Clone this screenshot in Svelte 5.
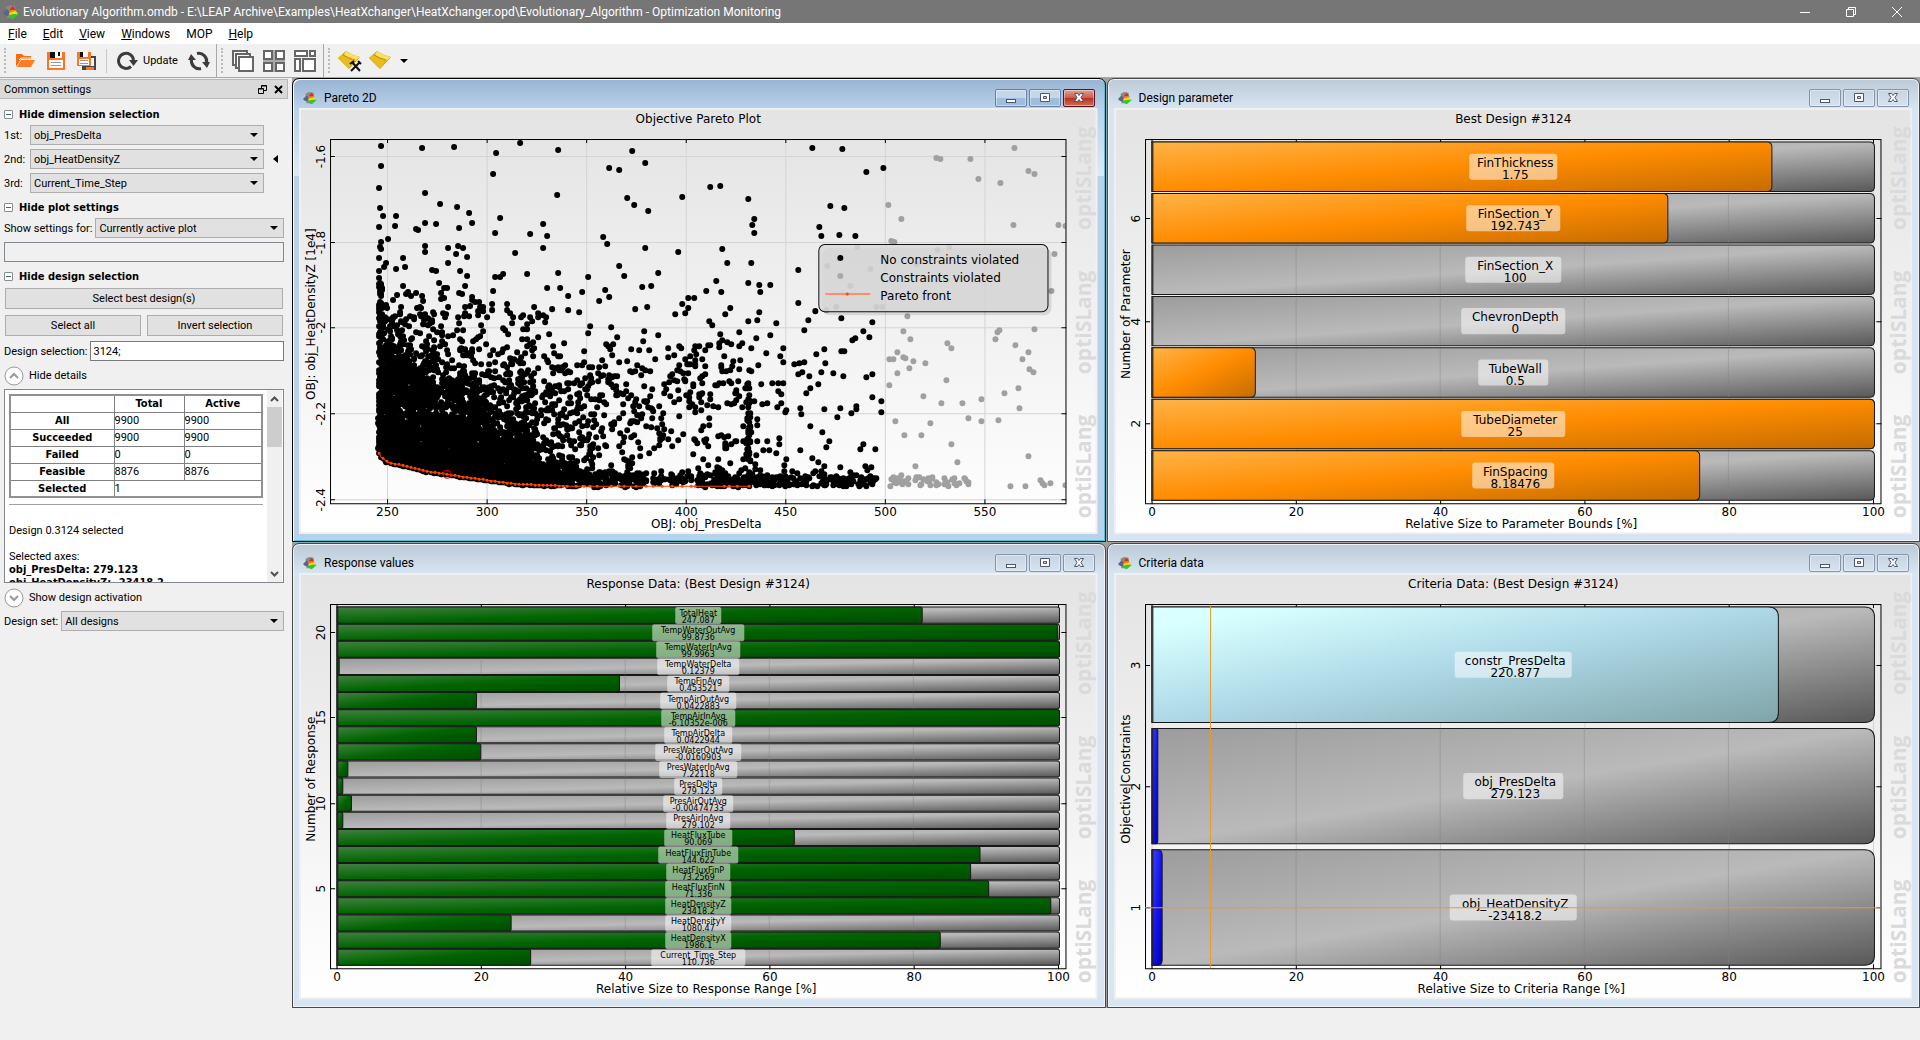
<script>
  const title =
    'Evolutionary Algorithm.omdb - E:\\LEAP Archive\\Examples\\HeatXchanger\\HeatXchanger.opd\\Evolutionary_Algorithm - Optimization Monitoring';

  const menus = [
    ['F', 'ile'],
    ['E', 'dit'],
    ['V', 'iew'],
    ['W', 'indows'],
    ['', 'MOP'],
    ['H', 'elp'],
  ];

  let first = 'obj_PresDelta';
  let second = 'obj_HeatDensityZ';
  let third = 'Current_Time_Step';
  let selection = '3124;';
  let filter = '';

  const dimensions = ['obj_PresDelta', 'obj_HeatDensityZ', 'Current_Time_Step'];

  const details = [
    ['All', '9900', '9900'],
    ['Succeeded', '9900', '9900'],
    ['Failed', '0', '0'],
    ['Feasible', '8876', '8876'],
  ];

  // name, value, percent of the range, width of the label plate
  const parameters = [
    ['FinThickness', '1.75', 85.8, 88],
    ['FinSection_Y', '192.743', 71.4, 94],
    ['FinSection_X', '100', 0, 96],
    ['ChevronDepth', '0', 0, 104],
    ['TubeWall', '0.5', 14.3, 70],
    ['TubeDiameter', '25', 100, 104],
    ['FinSpacing', '8.18476', 75.8, 82],
  ];

  const responses = [
    ['TotalHeat', '247.087', 81, 46],
    ['TempWaterOutAvg', '99.8736', 99.7, 92],
    ['TempWaterInAvg', '99.9963', 100, 84],
    ['TempWaterDelta', '0.12379', 0.3, 82],
    ['TempFinAvg', '0.453521', 39.1, 62],
    ['TempAirOutAvg', '0.0422883', 19.3, 76],
    ['TempAirInAvg', '-6.10352e-006', 100, 74],
    ['TempAirDelta', '0.0422944', 19.3, 68],
    ['PresWaterOutAvg', '-0.0160903', 19.9, 86],
    ['PresWaterInAvg', '7.22118', 1.5, 78],
    ['PresDelta', '279.123', 0.8, 48],
    ['PresAirOutAvg', '-0.00474733', 2, 70],
    ['PresAirInAvg', '279.102', 0.8, 64],
    ['HeatFluxTube', '90.069', 63.3, 68],
    ['HeatFluxFinTube', '144.622', 89, 80],
    ['HeatFluxFinP', '73.2569', 87.7, 64],
    ['HeatFluxFinN', '71.336', 90.2, 66],
    ['HeatDensityZ', '23418.2', 98.8, 66],
    ['HeatDensityY', '1080.47', 24.1, 66],
    ['HeatDensityX', '1986.1', 83.5, 66],
    ['Current_Time_Step', '110.736', 26.8, 94],
  ];

  const criteria = [
    ['constr_PresDelta', '220.877', 86.7, 117, 'cyan'],
    ['obj_PresDelta', '279.123', 0.8, 100, 'blue'],
    ['obj_HeatDensityZ', '-23418.2', 1.4, 127, 'blue'],
  ];

  const percentTicks = [0, 20, 40, 60, 80, 100].map((v) => [v, 38 + v * 7.21]);

  const windows = [
    {
      name: 'Pareto 2D', kind: 'pareto', active: true,
      title: 'Objective Pareto Plot', xLabel: 'OBJ: obj_PresDelta', yLabel: 'OBJ: obj_HeatDensityZ [1e4]',
      xTicks: [250, 300, 350, 400, 450, 500, 550].map((v, i) => [v, 88.5 + i * 99.5]),
      yTicks: [['-1.6', 48.5], ['-1.8', 134.5], ['-2', 219.5], ['-2.2', 305.5], ['-2.4', 391.5]],
    },
    {
      name: 'Design parameter', kind: 'bars',
      title: 'Best Design #3124', xLabel: 'Relative Size to Parameter Bounds [%]', yLabel: 'Number of Parameter',
      xTicks: percentTicks,
      yTicks: [['6', 110.5], ['4', 213.5], ['2', 315.5]],
      data: parameters, color: 'orange', gap: 2, radius: 5, font: 12,
    },
    {
      name: 'Response values', kind: 'bars',
      title: 'Response Data: (Best Design #3124)', xLabel: 'Relative Size to Response Range [%]', yLabel: 'Number of Response',
      xTicks: percentTicks,
      yTicks: [['20', 59.5], ['15', 144.5], ['10', 230.5], ['5', 315.5]],
      data: responses, color: 'green', gap: 1, radius: 2, font: 8,
    },
    {
      name: 'Criteria data', kind: 'bars', crosshair: true,
      title: 'Criteria Data: (Best Design #3124)', xLabel: 'Relative Size to Criteria Range [%]', yLabel: 'Objective|Constraints',
      xTicks: percentTicks,
      yTicks: [['3', 92.5], ['2', 213.5], ['1', 334.5]],
      data: criteria, gap: 6, radius: 10, font: 12,
    },
  ];

  // All bars share the band between y = 34 and y = 392
  function layoutBars(win) {
    const pitch = (358 + win.gap) / win.data.length;
    return win.data.map(([name, value, percent, plate, color], i) => ({
      name,
      value,
      plate,
      color: color || win.color,
      y: 34 + i * pitch,
      h: pitch - win.gap,
      w: percent * 7.22,
    }));
  }

  // Square on the left, rounded on the right
  function barPath(y, w, h, radius) {
    const r = Math.min(radius, w / 2);
    return `M38 ${y}h${w - r}q${r} 0 ${r} ${r}v${h - 2 * r}q0 ${r} ${-r} ${r}h${r - w}z`;
  }

  const outliers = [
    [82, 38], [82, 58], [80, 80], [81, 100], [84, 108], [80, 119], [97, 108], [96, 118], [89, 131], [82, 134],
    [81, 139], [82, 141], [80, 150], [87, 155], [85, 159], [80, 163], [80, 170], [97, 161], [104, 150], [106, 159],
    [123, 40], [155, 39], [126, 85], [141, 96], [158, 99], [170, 105], [173, 115], [160, 120], [137, 116], [126, 115],
    [117, 121], [119, 122], [126, 138], [126, 144], [149, 140], [159, 138], [164, 140], [157, 146], [168, 149], [149, 155],
    [133, 162], [137, 163], [161, 163], [168, 168], [140, 175], [145, 180], [148, 180], [166, 178], [104, 178], [109, 184],
    [98, 187], [194, 66], [197, 45], [221, 35], [259, 42], [258, 87], [201, 110], [196, 125], [231, 126], [244, 116],
    [248, 128], [244, 140], [216, 145], [259, 165], [228, 166], [204, 166], [196, 169], [201, 169], [194, 183], [248, 180],
    [261, 180], [283, 184], [289, 169], [306, 182], [308, 136], [304, 129], [320, 158], [325, 168], [346, 140], [343, 179],
    [352, 178], [359, 165], [328, 90], [335, 97], [349, 103], [310, 60], [320, 62], [333, 43], [346, 55], [383, 89],
    [379, 144], [336, 201], [300, 193], [280, 204], [269, 188], [269, 202], [253, 201], [376, 206], [383, 196], [389, 190],
    [395, 190], [389, 200], [345, 223], [359, 227], [312, 219], [318, 229], [291, 218], [289, 225], [239, 229], [411, 79],
    [421, 78], [449, 91], [455, 111], [453, 117], [455, 125], [423, 141], [428, 155], [452, 155], [417, 173], [407, 183],
    [422, 184], [449, 175], [460, 177], [471, 177], [461, 184], [431, 200], [426, 206], [460, 204], [458, 212], [449, 213],
    [410, 213], [413, 217], [477, 215], [513, 40], [543, 41], [584, 60], [567, 64], [531, 98], [545, 100], [520, 119],
    [522, 128], [540, 127], [556, 128], [499, 162], [499, 195], [516, 203], [509, 212], [542, 210], [573, 214], [564, 223],
    [570, 229], [556, 230], [553, 232], [505, 222], [440, 224], [421, 226], [471, 227], [457, 230], [443, 235], [484, 240],
    [525, 241], [467, 245], [481, 248], [517, 246], [542, 243], [545, 243], [526, 255], [484, 254], [459, 257], [495, 256],
    [500, 255], [505, 254], [499, 266], [503, 264], [510, 268], [522, 264], [534, 265], [544, 268], [567, 269], [573, 266],
    [462, 276], [473, 275], [479, 275], [484, 275], [479, 283], [482, 286], [511, 280], [519, 276], [507, 285], [573, 289],
    [582, 293], [582, 304], [557, 298], [557, 301], [525, 301], [501, 300], [502, 306], [487, 302], [486, 304], [482, 295],
    [478, 299], [463, 296], [468, 295], [541, 300], [552, 305], [538, 309], [511, 318], [523, 324], [530, 333], [527, 339],
    [501, 342], [513, 350], [519, 354], [525, 358], [541, 359], [564, 336], [561, 341], [576, 341], [566, 358], [572, 359],
    [487, 351], [485, 357], [468, 333], [480, 330], [480, 336], [464, 342], [470, 342], [477, 345], [457, 347], [458, 311],
    [458, 317], [451, 319],
  ];

  const violated = [
    [715, 40], [637, 50], [641, 51], [671, 51], [679, 71], [701, 75], [729, 63], [735, 66], [589, 97], [602, 111],
    [714, 117], [759, 117], [766, 118], [592, 133], [595, 134], [558, 139], [638, 142], [650, 139], [528, 158], [571, 161],
    [551, 178], [617, 156], [537, 199], [577, 199], [583, 199], [527, 202], [755, 146], [752, 183], [608, 208], [604, 223],
    [611, 231], [735, 221], [700, 222], [698, 224], [696, 231], [716, 237], [729, 244], [723, 251], [648, 235], [652, 240],
    [598, 244], [604, 249], [606, 250], [594, 251], [590, 251], [614, 253], [626, 255], [610, 260], [598, 265], [647, 272],
    [590, 277], [730, 261], [734, 264], [719, 280], [705, 285], [682, 291], [624, 288], [642, 295], [663, 295], [720, 300],
    [669, 310], [682, 313], [699, 312], [596, 313], [631, 315], [605, 327], [622, 327], [652, 336], [729, 348], [658, 354],
    [616, 358], [602, 367], [741, 372], [751, 375], [745, 377], [743, 375], [711, 378], [726, 378], [766, 377],
  ];

  const front = [
    [80, 345], [82, 349], [89, 354], [107, 358], [127, 363], [148, 366], [167, 369], [188, 372],
    [220, 376], [245, 377], [273, 378], [407, 378], [450, 378],
  ];

  // Height of the Pareto front at x
  function frontAt(x) {
    for (let i = 1; i < front.length; i++) {
      const [x0, y0] = front[i - 1];
      const [x1, y1] = front[i];
      if (x <= x1) return y0 + ((y1 - y0) * (x - x0)) / (x1 - x0);
    }
    return 378;
  }

  let seed = 3124;
  function random() {
    seed = (seed * 1664525 + 1013904223) % 4294967296;
    return seed / 4294967296;
  }

  // x from, x to, y from, y to, number of designs
  const clouds = [
    [80, 83, 172, 345, 120],
    [80, 130, 188, 215, 30], [130, 180, 188, 215, 22], [180, 260, 200, 215, 22], [260, 400, 185, 215, 3],
    [80, 110, 210, 245, 54], [110, 180, 210, 245, 52], [180, 250, 220, 245, 18], [250, 400, 230, 250, 16],
    [80, 105, 243, 262, 100], [80, 125, 262, 305, 420], [80, 180, 308, 372, 1500],
    [105, 130, 243, 262, 22], [130, 180, 240, 280, 70], [180, 260, 245, 280, 80],
    [125, 180, 275, 305, 170], [180, 240, 275, 310, 110], [175, 235, 308, 345, 210],
    [180, 235, 338, 378, 420], [235, 275, 355, 378, 150], [235, 300, 280, 355, 150],
    [255, 330, 255, 290, 44], [300, 400, 240, 300, 80], [300, 400, 300, 350, 60],
    [265, 340, 355, 378, 70], [330, 405, 364, 378, 70], [250, 345, 369, 378, 100],
    [395, 455, 235, 300, 62], [395, 455, 300, 365, 34], [400, 470, 370, 378, 75], [400, 460, 362, 375, 26],
    [455, 577, 368, 378, 120], [460, 575, 362, 372, 22],
  ];
  // Designs that share one value of the first objective
  const columns = [[448, 451, 275, 378, 44], [425, 427, 335, 378, 14]];

  const feasible = [...outliers];
  function scatter([x0, x1, y0, y1, count], spread) {
    for (let i = 0; i < count; i++) {
      const x = x0 + random() * (x1 - x0) + (random() - 0.5) * spread;
      const y = y0 + random() * (y1 - y0) + (random() - 0.5) * spread;
      if (x > 79 && y < frontAt(x) + 1) feasible.push([Math.round(x), Math.round(y)]);
    }
  }
  for (const cloud of clouds) scatter(cloud, cloud[1] - cloud[0] > 20 && cloud[1] < 500 ? 14 : 0);
  for (const column of columns) scatter(column, 0);

  // Designs packed along the front itself
  for (let x = 80; x < 260; x += 2) {
    for (let k = 0; k < 5; k++) feasible.push([x, Math.round(frontAt(x) - k * 4)]);
  }
  for (let i = 0; i < 50; i++) {
    violated.push([590 + Math.round(random() * 80), 369 + Math.round(random() * 9)]);
  }

  // Zero-length segments with round caps draw as dots
  const dots = (points) => points.map(([x, y]) => `M${x} ${y}h0`).join('');

  const frontMarks = [];
  for (let x = 80; x < 270; x += 4) frontMarks.push([x, Math.round(frontAt(x))]);
  for (const x of [277, 285, 291, 298, 312, 320, 325, 337, 347, 354, 363, 373, 383, 392, 396, 425, 430, 438, 450]) {
    frontMarks.push([x, 378]);
  }
</script>

{#snippet appIcon()}
  <svg class="app-icon" width="16" height="16" viewBox="0 0 16 16" aria-hidden="true">
    <path d="M3 3 7 1 12 2 13 8 7 14 4 14z" fill="#8a8a80" />
    <path d="M0 9 4 5 7 8 5 12 2 11z" fill="#5a6488" />
    <path d="M7 5 10 2 12 5 11 7 8 7z" fill="#e8281c" />
    <path d="M6 8 8 6 12 6 13 8 10 9 7 10z" fill="#f88a18" />
    <path d="M6 9 13 7 15 10 11 11 7 12z" fill="#f4dc18" />
    <path d="M6 11 11 10 16 10 10 15 7 14z" fill="#30c828" />
  </svg>
{/snippet}

{#snippet gem()}
  <path d="M0 9 8 2Q14 6 22 8L11 20z" fill="#c89808" />
  <path d="M8 2Q14 6 22 8L17 12Q10 9 5 7z" fill="#f8e060" />
  <path d="M0 9 5 5Q10 10 17 12L11 20z" fill="#e8bc20" />
  <path d="M5 6Q10 9 17 11" fill="none" stroke="#b88800" />
{/snippet}

{#snippet axes(win)}
  <g class="frame">
    <rect x="31.5" y="31.5" width="735" height="364" />
    {#each win.xTicks as [, x]}
      <path d="M{x} 31v4M{x} 396v-5" />
    {/each}
    {#each win.yTicks as [, y]}
      <path d="M31 {y}h5M767 {y}h-5" />
    {/each}
  </g>
  <text class="caption" x="399" y="15">{win.title}</text>
  {#each win.xTicks as [label, x]}
    <text x={x} y="408">{label}</text>
  {/each}
  {#each win.yTicks as [label, y]}
    <text transform="translate(26 {y}) rotate(-90)">{label}</text>
  {/each}
  <text x="407" y="420">{win.xLabel}</text>
  <text transform="translate(16 206) rotate(-90)">{win.yLabel}</text>
{/snippet}

{#snippet grid(win)}
  <g class="grid">
    {#each win.xTicks as [, x]}
      <path d="M{x} 32V395" />
    {/each}
    {#each win.yTicks as [, y]}
      <path d="M32 {y}H766" />
    {/each}
  </g>
{/snippet}

<div class="app">
  <header class="titlebar">
    {@render appIcon()}
    <span class="title">{title}</span>
    <button aria-label="Minimize"><svg width="12" height="12"><path d="M1 6.5h10" /></svg></button>
    <button aria-label="Restore"><svg width="12" height="12"><path d="M1.500 3.500h7v7h-7zM3.500 3V1.500h7v7H9" /></svg></button>
    <button aria-label="Close"><svg width="12" height="12"><path d="M1 1l10 10M11 1L1 11" /></svg></button>
  </header>

  <nav class="menubar">
    {#each menus as [key, rest]}
      <button><u>{key}</u>{rest}</button>
    {/each}
  </nav>

  <div class="toolbar">
    <div class="group">
      <button aria-label="Open">
        <svg width="20" height="20" viewBox="0 0 20 20">
          <path d="M0 16V3h6l2 2h7v3H5z" fill="#ff6a10" />
          <path d="M5 9h14l-4 7H1z" fill="#ff7d20" />
          <path d="M3 9l2-2h12" fill="none" stroke="#fff" />
        </svg>
      </button>
      <button aria-label="Save">
        <svg width="20" height="20" viewBox="0 0 20 20">
          <path d="M1 1h18v18H1z" fill="#ff7420" />
          <path d="M4 1h12v6H4z" fill="#111" /><path d="M9 1h7v6H9z" fill="#fff" />
          <path d="M12 1h2v4h-2z" fill="#111" />
          <path d="M3 9h14v8H3z" fill="#fff" /><path d="M5 11.500h10M5 14.500h10" stroke="#999" />
        </svg>
      </button>
      <button aria-label="Save all">
        <svg width="20" height="20" viewBox="0 0 20 20">
          <path d="M6 5h14v14H6z" fill="#444" /><path d="M8 7h10v8H8z" fill="#fff" />
          <path d="M10 16h8v3h-8z" fill="#ff7420" />
          <path d="M1 1h14v14H1z" fill="#ff7420" />
          <path d="M4 1h8v5H4z" fill="#111" /><path d="M7 1h5v5H7z" fill="#fff" />
          <path d="M3 8h10v6H3z" fill="#fff" /><path d="M4 9.500h8M4 12.500h8" stroke="#999" />
        </svg>
      </button>
      <i class="rule"></i>
      <button class="update">
        <svg width="22" height="20" viewBox="0 0 22 20">
          <path d="M14 15.500A7.500 7.500 0 1 1 16.500 9" fill="none" stroke="#3c3c3c" stroke-width="3" />
          <path d="M12 9h9l-4.500 6z" fill="#3c3c3c" />
        </svg>
        Update
      </button>
      <button aria-label="Update automatically">
        <svg width="22" height="22" viewBox="0 0 22 22">
          <path d="M9 3.500A8 8 0 0 1 18.500 13M13 18.500A8 8 0 0 1 3.500 9" fill="none" stroke="#3c3c3c" stroke-width="3" />
          <path d="M14 12h8l-3 6zM0 10h8L3 4z" fill="#3c3c3c" />
        </svg>
      </button>
    </div>
    <div class="group windows">
      <button aria-label="Cascade">
        <svg width="24" height="24" viewBox="0 0 24 24">
          <g fill="#fff" stroke="#666" stroke-width="2">
            <rect x="2" y="2" width="14" height="14" />
            <rect x="5" y="5" width="14" height="14" />
            <rect x="8" y="8" width="14" height="14" />
          </g>
        </svg>
      </button>
      <button aria-label="Tile">
        <svg width="24" height="24" viewBox="0 0 24 24">
          <path d="M1 1h22v22H1z" fill="#aaa" />
          <g fill="#fff" stroke="#666" stroke-width="2">
            <path d="M2 2h8v8H2zM14 2h8v8h-8zM2 14h8v8H2zM14 14h8v8h-8z" />
          </g>
        </svg>
      </button>
      <button aria-label="Arrange">
        <svg width="24" height="24" viewBox="0 0 24 24">
          <g fill="#fff" stroke="#666" stroke-width="2">
            <path d="M2 2h12v5H2zM17 2h5v5h-5zM2 10h5v12H2zM10 10h12v12H10z" />
          </g>
        </svg>
      </button>
    </div>
    <div class="group last">
      <button aria-label="Postprocessing settings">
        <svg width="24" height="24" viewBox="0 0 24 24">
          {@render gem()}
          <path d="M13 22l8-8M14 13l8 9M12 15l4-3M20 12l3 3" stroke="#111" stroke-width="2" />
        </svg>
      </button>
      <button aria-label="Postprocessing">
        <svg width="24" height="24" viewBox="0 0 24 24">{@render gem()}</svg>
      </button>
      <button class="more" aria-label="More"><svg width="8" height="4"><path d="M0 0h8l-4 4z" /></svg></button>
    </div>
  </div>

  <main>
    <aside>
      <div class="dock-title">
        <span>Common settings</span>
        <button aria-label="Float">
          <svg width="9" height="9"><path d="M.5 3.500h5v5h-5zM3.500 3V.5h5v5H6M.5 4h5M3 1h6" fill="none" stroke="#000" /></svg>
        </button>
        <button aria-label="Close panel">
          <svg width="9" height="9"><path d="M1 1l7 7M8 1L1 8" stroke="#000" stroke-width="2" /></svg>
        </button>
      </div>

      <div class="settings">
        <button class="heading"><i class="minus"></i>Hide dimension selection</button>
        <div class="row dim">
          <label for="dim1">1st:</label>
          <span class="select"><select id="dim1" bind:value={first}>{#each dimensions as d}<option>{d}</option>{/each}</select></span>
        </div>
        <div class="row dim">
          <label for="dim2">2nd:</label>
          <span class="select"><select id="dim2" bind:value={second}>{#each dimensions as d}<option>{d}</option>{/each}</select></span>
          <button class="swap" aria-label="Swap axes"><svg width="5" height="8"><path d="M5 0v8L0 4z" /></svg></button>
        </div>
        <div class="row dim">
          <label for="dim3">3rd:</label>
          <span class="select"><select id="dim3" bind:value={third}>{#each dimensions as d}<option>{d}</option>{/each}</select></span>
        </div>

        <button class="heading"><i class="minus"></i>Hide plot settings</button>
        <div class="row">
          <label for="plot">Show settings for:</label>
          <span class="select"><select id="plot"><option>Currently active plot</option></select></span>
        </div>
        <input class="filter" aria-label="Filter" bind:value={filter} />

        <button class="heading"><i class="minus"></i>Hide design selection</button>
        <div class="buttons"><button>Select best design(s)</button></div>
        <div class="buttons"><button>Select all</button><button>Invert selection</button></div>
        <div class="row">
          <label for="designs">Design selection:</label>
          <input id="designs" bind:value={selection} />
        </div>
        <button class="expander">
          <svg width="20" height="20"><circle cx="10" cy="10" r="9" /><path d="M6 12l4-4 4 4" /></svg>
          Hide details
        </button>

        <div class="details">
          <div class="content">
            <table>
              <thead>
                <tr><th></th><th>Total</th><th>Active</th></tr>
              </thead>
              <tbody>
                {#each details as [name, total, active]}
                  <tr><th>{name}</th><td>{total}</td><td>{active}</td></tr>
                {/each}
                <tr><th>Selected</th><td colspan="2">1</td></tr>
              </tbody>
            </table>
            <hr />
            <p>Design 0.3124 selected</p>
            <p>Selected axes:<br /><b>obj_PresDelta: 279.123<br />obj_HeatDensityZ: -23418.2</b></p>
          </div>
          <div class="scrollbar">
            <button aria-label="Scroll up"><svg width="9" height="6"><path d="M1 5l3.500-3.500L8 5" /></svg></button>
            <i></i>
            <button aria-label="Scroll down"><svg width="9" height="6"><path d="M1 1l3.500 3.500L8 1" /></svg></button>
          </div>
        </div>

        <button class="expander">
          <svg width="20" height="20"><circle cx="10" cy="10" r="9" /><path d="M6 8l4 4 4-4" /></svg>
          Show design activation
        </button>
        <div class="row">
          <label for="set">Design set:</label>
          <span class="select"><select id="set"><option>All designs</option></select></span>
        </div>
      </div>
    </aside>

    <div class="workspace">
      {#each windows as win}
        <section class="window" class:active={win.active}>
          <div class="caption-bar">
            {@render appIcon()}
            <h2>{win.name}</h2>
            <button aria-label="Minimize {win.name}">
              <svg width="12" height="12"><rect x="1.500" y="7.500" width="9" height="3" /></svg>
            </button>
            <button aria-label="Maximize {win.name}">
              <svg width="12" height="12"><path d="M1.500 1.500h9v8h-9zM4.500 4.500v2h3v-2z" fill-rule="evenodd" /></svg>
            </button>
            <button class="close" aria-label="Close {win.name}">
              <svg width="12" height="12">
                <path d="M1.500 1.500h3L6 3.500l1.500-2h3L8 5.500l2.500 4h-3L6 7.500l-1.500 2h-3L4 5.500z" />
              </svg>
            </button>
          </div>
          <svg class="chart" viewBox="0 0 798 426" role="img" aria-label={win.title}>
            <defs>
              <linearGradient id="backdrop" x1="0" y1="0" x2="0" y2="1">
                <stop offset="0" stop-color="#e4e4e4" /><stop offset="0.100" stop-color="#e6e6e6" /><stop offset="1" stop-color="#fff" />
              </linearGradient>
              <linearGradient id="gray" x1="0" y1="0" x2="1" y2="1">
                <stop offset="0" stop-color="#9c9c9c" /><stop offset="0.500" stop-color="#bababa" /><stop offset="1" stop-color="#585858" />
              </linearGradient>
              <linearGradient id="orange" x1="0" y1="0" x2="1" y2="1">
                <stop offset="0" stop-color="#ffb347" /><stop offset="0.500" stop-color="#ff8c00" /><stop offset="1" stop-color="#c46c00" />
              </linearGradient>
              <linearGradient id="green" x1="0" y1="0" x2="1" y2="1">
                <stop offset="0" stop-color="#408040" /><stop offset="0.500" stop-color="#006400" /><stop offset="1" stop-color="#004c00" />
              </linearGradient>
              <linearGradient id="cyan" x1="0" y1="0" x2="1" y2="1">
                <stop offset="0" stop-color="#dff" /><stop offset="0.100" stop-color="#d8ffff" />
                <stop offset="0.500" stop-color="#add8e6" /><stop offset="1" stop-color="#80a4a8" />
              </linearGradient>
              <linearGradient id="blue" x1="0" y1="0" x2="1" y2="1">
                <stop offset="0" stop-color="#44f" /><stop offset="0.500" stop-color="#1414f0" /><stop offset="1" stop-color="#00a" />
              </linearGradient>
              <clipPath id="plot-area"><rect x="32" y="32" width="734" height="363" /></clipPath>
            </defs>
            <rect width="798" height="426" fill="#f0f0f0" />
            <rect x="2" y="2" width="794" height="422" fill="url(#backdrop)" />
            {#each [122, 266, 410] as y}
              <text class="watermark" transform="translate(792 {y}) rotate(-90)">optiSLang</text>
            {/each}

            {#if win.kind === 'pareto'}
              {@render grid(win)}
              <g clip-path="url(#plot-area)">
                <path class="dots" d={dots(violated)} stroke="#a0a0a0" />
                <path class="dots" d={dots(feasible)} stroke="#000" />
                <polyline points={front.join(' ')} fill="none" stroke="#ff4500" />
                <path class="marks" d={dots(frontMarks)} />
                <circle cx="148" cy="366" r="4" fill="none" stroke="#e00000" />
              </g>
              {@render axes(win)}
              <rect x="523" y="140" width="229" height="67" rx="7" fill="#000" opacity="0.100" />
              <rect class="legend" x="519.500" y="136.500" width="229" height="67" rx="6" />
              <path class="dots" d="M541 150h0" stroke="#000" />
              <path class="dots" d="M541 168h0" stroke="#aaa" />
              <path d="M526 186h45" stroke="#f89070" stroke-width="2" />
              <path class="marks" d="M548 186h0" />
              <g class="legend-text">
                <text x="581" y="156">No constraints violated</text>
                <text x="581" y="174">Constraints violated</text>
                <text x="581" y="192">Pareto front</text>
              </g>
            {:else}
              {@render grid(win)}
              {@render axes(win)}
              {#each layoutBars(win) as bar}
                <path class="bar" d={barPath(bar.y, 722, bar.h, win.radius)} fill="url(#gray)" />
                <path class="bar-grid" d="M182 {bar.y}v{bar.h}M326 {bar.y}v{bar.h}M470 {bar.y}v{bar.h}M614 {bar.y}v{bar.h}" />
                {#if bar.w > 0}
                  <path class="bar" d={barPath(bar.y, bar.w, bar.h, win.radius)} fill="url(#{bar.color})" />
                {/if}
                <path d="M38.500 {bar.y}v{bar.h}" stroke="#222" stroke-width="2" opacity="0.700" />
              {/each}
              {#each layoutBars(win) as bar}
                {#if win.font === 8}
                  <rect class="plate" x={399 - bar.plate / 2} y={bar.y} width={bar.plate} height="17" rx="2" />
                  <text class="small" x="399" y={bar.y + 9}>{bar.name}</text>
                  <text class="small" x="399" y={bar.y + 16}>{bar.value}</text>
                {:else}
                  <rect class="plate" x={399 - bar.plate / 2} y={bar.y + bar.h / 2 - 13} width={bar.plate} height="26" rx="3" />
                  <text x="401" y={bar.y + bar.h / 2}>{bar.name}</text>
                  <text x="401" y={bar.y + bar.h / 2 + 12}>{bar.value}</text>
                {/if}
              {/each}
              {#if win.crosshair}
                <path class="crosshair" d="M96.500 32V395M31 334.500H767" />
              {/if}
            {/if}
          </svg>
        </section>
      {/each}
    </div>
  </main>
</div>

<style>
  :global(body) {
    margin: 0;
    background: #f0f0f0;
  }
  .app {
    min-height: 100vh;
    display: flex;
    flex-direction: column;
    font-family: Roboto, 'DejaVu Sans Condensed', sans-serif;
    font-size: 11px;
    color: #000;
    background: #f0f0f0;
  }
  button {
    padding: 0;
    border: 0;
    background: none;
    font: inherit;
    color: inherit;
  }
  svg {
    display: block;
  }

  /* Title bar */
  .titlebar {
    display: flex;
    align-items: center;
    height: 23px;
    padding-left: 3px;
    font-size: 12px;
    color: #fff;
    background: #767676;
  }
  .titlebar .title {
    flex: 1;
    margin-left: 4px;
  }
  .titlebar button {
    width: 46px;
    height: 20px;
    display: grid;
    place-items: center;
  }
  .titlebar button path {
    fill: none;
    stroke: #fff;
  }
  .menubar {
    display: flex;
    gap: 16px;
    height: 21px;
    padding-left: 8px;
    font-size: 12px;
    background: #fff;
  }

  /* Toolbar */
  .toolbar {
    display: flex;
    height: 34px;
    box-sizing: border-box;
    border-bottom: 1px solid #a8a8a8;
  }
  .group {
    display: flex;
    align-items: center;
    gap: 10px;
    padding: 0 6px 0 16px;
    border-right: 1px solid #a8a8a8;
    position: relative;
  }
  .group::before {
    content: '';
    position: absolute;
    left: 4px;
    top: 4px;
    bottom: 4px;
    border-left: 2px dotted #bbb;
  }
  .group.windows {
    gap: 7px;
    padding-left: 14px;
  }
  .group.last {
    gap: 7px;
    padding-left: 14px;
    border: 0;
  }
  .rule {
    width: 1px;
    height: 24px;
    background: #c8c8c8;
  }
  .update {
    display: flex;
    align-items: center;
    gap: 4px;
  }

  main {
    display: flex;
    gap: 4px;
  }

  /* Settings dock */
  aside {
    flex: 0 0 288px;
    padding-top: 1px;
  }
  .dock-title {
    display: flex;
    align-items: center;
    gap: 7px;
    height: 20px;
    box-sizing: border-box;
    padding: 0 4px;
    border: 1px solid #b8b8b8;
    border-left: 0;
    background: #dadada;
  }
  .dock-title span {
    flex: 1;
  }
  .settings {
    display: flex;
    flex-direction: column;
    gap: 4px;
    padding: 5px 4px;
  }
  .heading {
    display: flex;
    align-items: center;
    gap: 6px;
    height: 17px;
    padding-top: 4px;
    box-sizing: border-box;
    font-family: 'DejaVu Sans Condensed', sans-serif;
    font-weight: bold;
  }
  .minus {
    width: 7px;
    height: 7px;
    border: 1px solid #8c8c8c;
    border-radius: 1px;
    background: linear-gradient(#4060a0, #4060a0) center / 5px 1px no-repeat #fff;
  }
  .row {
    display: flex;
    align-items: center;
    gap: 3px;
    height: 20px;
  }
  .dim {
    gap: 6px;
  }
  .dim label {
    width: 20px;
  }
  .dim .select {
    flex: 0 0 234px;
  }
  .swap {
    margin-left: 3px;
  }
  .select {
    flex: 1;
    position: relative;
    display: flex;
  }
  .select::after {
    content: '';
    position: absolute;
    right: 6px;
    top: 8px;
    border: 4px solid transparent;
    border-top-color: #000;
    border-bottom: 0;
    pointer-events: none;
  }
  select,
  input {
    flex: 1;
    min-width: 0;
    height: 20px;
    box-sizing: border-box;
    padding: 0 3px;
    border: 1px solid #adadad;
    border-radius: 0;
    appearance: none;
    font: inherit;
    color: #000;
    background: #e1e1e1;
  }
  input {
    padding: 0 2px;
    border-color: #7a7a7a;
    background: #fff;
  }
  .filter {
    flex: none;
    border-color: #828790;
    background: #f0f0f0;
  }
  .buttons {
    display: flex;
    gap: 6px;
    margin: 1px;
  }
  .buttons button {
    flex: 1;
    height: 21px;
    border: 1px solid #adadad;
    background: #e1e1e1;
  }
  .expander {
    display: flex;
    align-items: center;
    gap: 5px;
    height: 20px;
    padding-top: 1px;
  }
  .expander circle {
    fill: #fff;
    stroke: #999;
  }
  .expander path {
    fill: none;
    stroke: #999;
    stroke-width: 2;
  }
  .details {
    display: flex;
    height: 194px;
    box-sizing: border-box;
    border: 1px solid #828790;
    background: #fff;
    overflow: hidden;
  }
  .content {
    flex: 1;
    padding: 4px;
  }
  table {
    width: 100%;
    border-collapse: collapse;
    border: 2px solid #909090;
    line-height: 15px;
  }
  th,
  td {
    height: 17px;
    box-sizing: border-box;
    padding: 0;
    border: 1px solid #808080;
    text-align: left;
  }
  th {
    width: 78px;
    text-align: center;
  }
  th:first-child {
    width: 104px;
  }
  th:nth-child(2) {
    width: 70px;
  }
  th,
  b {
    font-family: 'DejaVu Sans Condensed', sans-serif;
    font-weight: bold;
  }
  hr {
    margin: 6px 0 19px;
    border: 0;
    border-top: 1px solid #a0a0a0;
  }
  p {
    margin: 0 0 13px;
    line-height: 13px;
  }
  .scrollbar {
    display: flex;
    flex-direction: column;
    align-items: center;
    width: 15px;
    margin-right: 1px;
    background: #f0f0f0;
  }
  .scrollbar button {
    height: 17px;
  }
  .scrollbar path {
    fill: none;
    stroke: #505050;
    stroke-width: 2;
  }
  .scrollbar i {
    width: 15px;
    height: 40px;
    margin-bottom: auto;
    background: #cdcdcd;
  }

  /* Sub-windows */
  .workspace {
    flex: 1;
    min-width: 0;
    display: grid;
    grid-template-columns: 1fr 1fr;
    gap: 1px;
    background: #a0a0a0;
  }
  .window {
    box-sizing: border-box;
    padding: 0 7px 7px 6px;
    border: 1px solid #484848;
    border-radius: 7px 7px 0 0;
    box-shadow: inset 0 0 0 1px #eef4fa;
    background: linear-gradient(#bccad8, #d7e4f2 29px);
  }
  .window.active {
    border-color: #000;
    box-shadow: inset 1px 1px 0 #fff, inset -1px -1px 0 #30d0e8;
    background: linear-gradient(#98b4d2, #b9d1ea 29px, #dfe9f5 97px, #b9d1ea 97px);
  }
  .caption-bar {
    display: flex;
    align-items: center;
    gap: 2px;
    height: 29px;
    padding: 9px 3px 0 4px;
    box-sizing: border-box;
  }
  .caption-bar .app-icon {
    width: 14px;
    height: 14px;
  }
  h2 {
    flex: 1;
    margin: 0 0 0 5px;
    font-size: 12px;
    font-weight: normal;
  }
  .caption-bar button {
    display: grid;
    place-items: center;
    width: 32px;
    height: 18px;
    border: 1px solid #8494ae;
    border-radius: 2px;
    box-shadow: inset 0 0 0 1px rgba(255, 255, 255, 0.4);
  }
  .caption-bar button svg {
    fill: #fff;
    stroke: #4c566c;
  }
  .active .caption-bar button {
    border-color: #6880a4;
    background: linear-gradient(#c4d6ea 50%, #a0bcdc 50%);
  }
  .active .caption-bar .close {
    border-color: #581420;
    background: linear-gradient(#e0a094, #cc5c48 50%, #b43020 50%, #d07050);
  }

  /* Charts */
  .chart {
    width: 100%;
    height: auto;
    font-family: 'DejaVu Sans', Verdana, sans-serif;
    font-size: 12px;
    text-anchor: middle;
  }
  .frame {
    fill: none;
    stroke: #000;
  }
  .grid {
    stroke: #d4d4d4;
  }
  .dots {
    stroke-width: 6;
    stroke-linecap: round;
  }
  .marks {
    stroke: #ff4500;
    stroke-width: 3;
    stroke-linecap: round;
  }
  .bar {
    stroke: #181818;
  }
  .bar-grid {
    stroke: #808080;
    opacity: 0.4;
  }
  .plate {
    fill: #fff;
    opacity: 0.52;
  }
  .small {
    font-size: 8px;
  }
  .legend {
    fill: #d8d8d8;
    fill-opacity: 0.82;
    stroke: #111;
  }
  .legend-text {
    text-anchor: start;
  }
  .crosshair {
    stroke: #e89c28;
    stroke-width: 1;
  }
  .watermark {
    font-family: 'Open Sans', sans-serif;
    font-size: 21px;
    font-weight: bold;
    text-anchor: start;
    fill: #dadada;
  }
</style>
